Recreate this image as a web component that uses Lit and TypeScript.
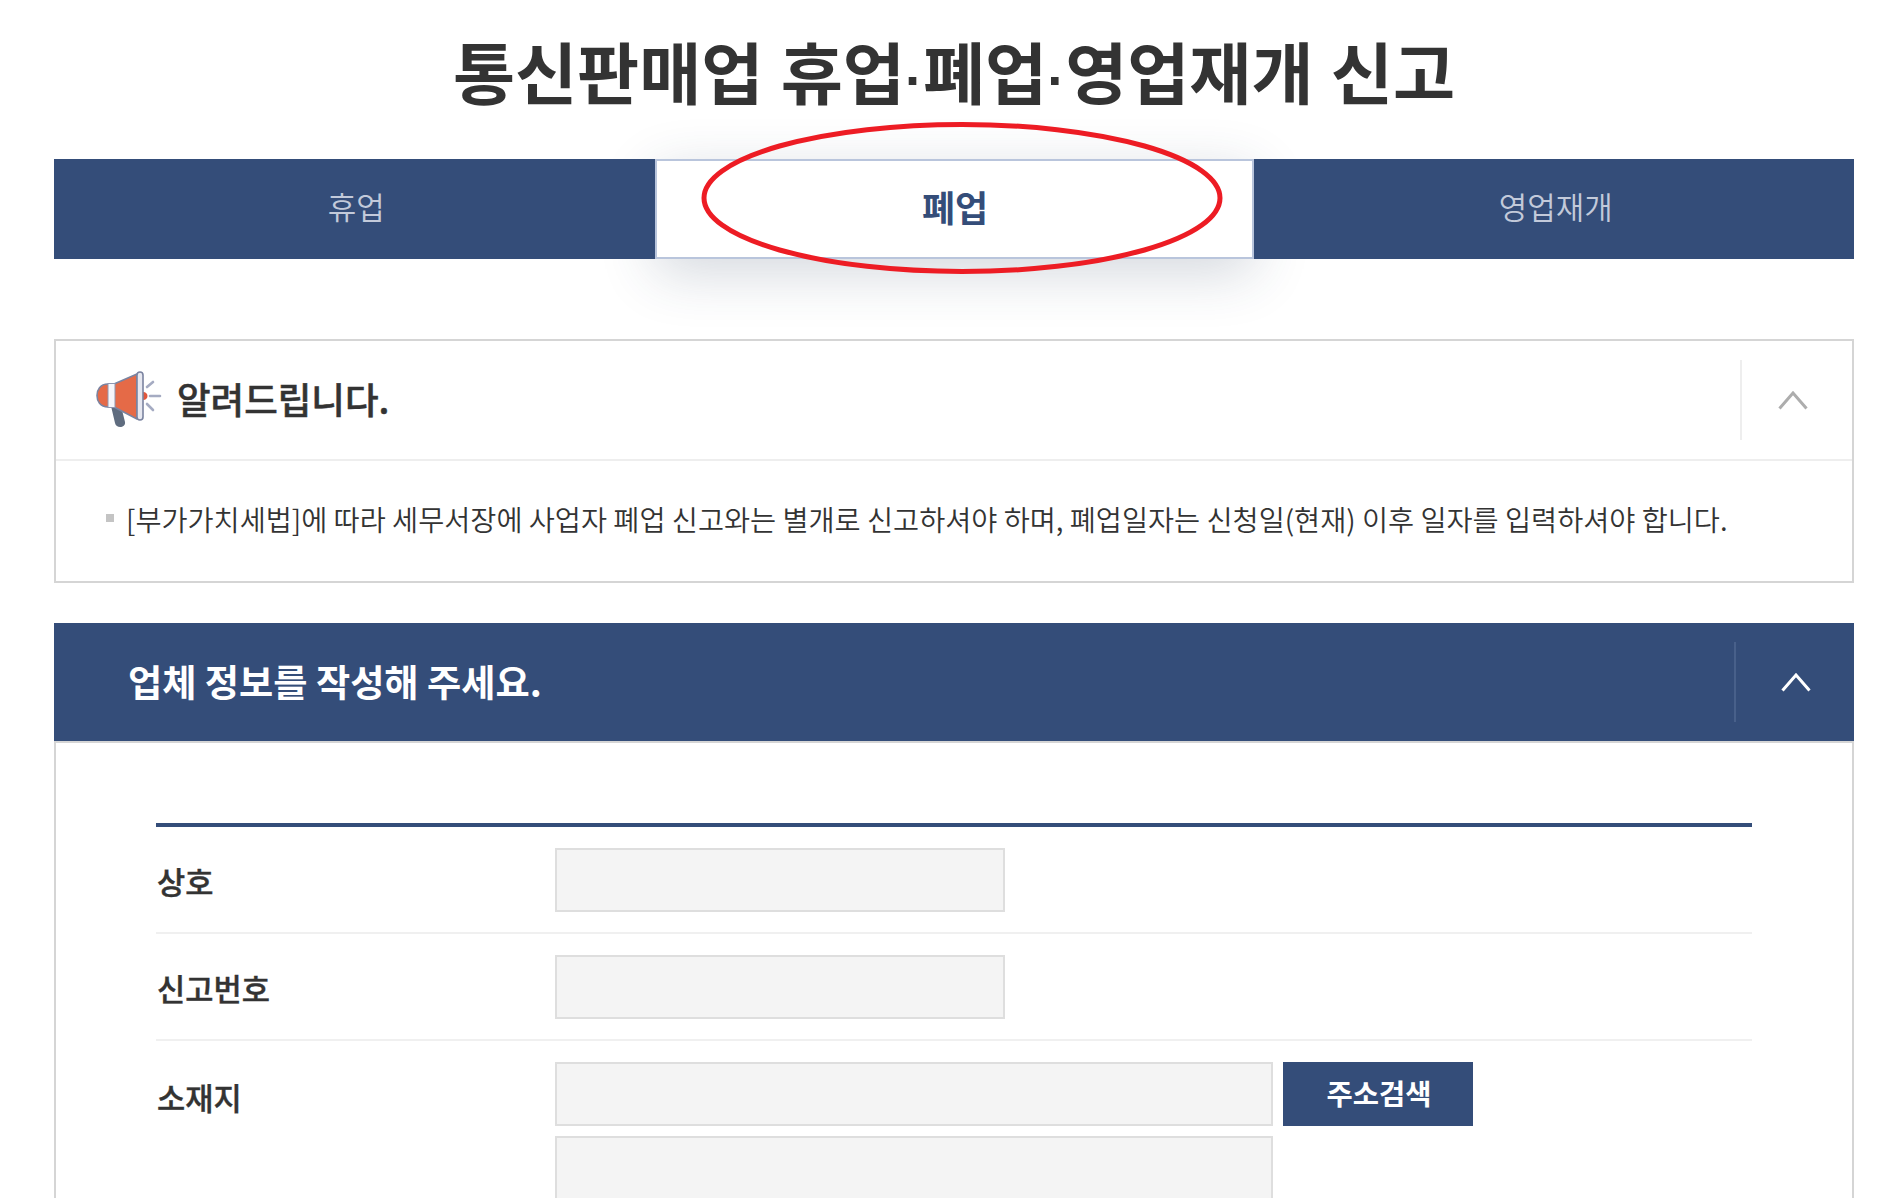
import { LitElement, html, css } from 'lit';
import { customElement, property } from 'lit/decorators.js';

const chevron = html`<svg class="chev" width="30" height="19" viewBox="0 0 30 19"><path d="M1.500 17.500 15 2 28.500 17.500" fill="none" stroke="currentColor" stroke-width="3"/></svg>`;

const megaphone = html`<svg width="66" height="58" viewBox="0 0 66 58">
  <path d="M51 16l6-5M54 25h10M51 33l6 6" fill="none" stroke="#a5abc2" stroke-width="2.600" stroke-linecap="round"/>
  <path d="M47 21c6 0 6 8 0 8z" fill="#e0563b"/>
  <path d="M15 35l4 17c1 6 11 5 10-1l-4-16z" fill="#5f6c7f"/>
  <path d="M12 13C4 13 1 19 1 24.500S4 36 12 36h6l23 12V3L18 13z" fill="#e56a47" stroke="#7a83a0" stroke-width="1.600" stroke-linejoin="round"/>
  <rect x="12" y="12.500" width="7" height="24" fill="#f6f6fa" stroke="#8f96b0" stroke-width="1"/>
  <rect x="41" y="1" width="6" height="48" rx="3" fill="#e7e8f0" stroke="#7a83a0" stroke-width="1.600"/>
</svg>`;

@customElement('app-root')
export class AppRoot extends LitElement {
  @property({ type: String }) activeTab = '폐업';

  static styles = css`
    :host {
      display: block;
      height: 1198px;
      overflow: hidden;
      background: #fff;
      font-family: "Noto Sans CJK KR", "Noto Sans", sans-serif;
      color: #333;
    }
    .page {
      position: relative;
      width: 1800px;
      margin-left: 54px;
    }
    h1 {
      margin: 0;
      height: 159px;
      padding-top: 24px;
      box-sizing: border-box;
      text-align: center;
      font-size: 67.500px;
      line-height: 92px;
      font-weight: 700;
      word-spacing: 2px;
      color: #333;
    }
    h1 .dot {
      font-family: "Liberation Sans", sans-serif;
      font-size: 54px;
    }

    /* Tabs */
    .tabs {
      display: flex;
      height: 100px;
    }
    .tab {
      position: relative;
      z-index: 1;
      width: 600.500px;
      display: flex;
      align-items: center;
      justify-content: center;
      background: #344d79;
      color: #c3cada;
      font-size: 31px;
      font-weight: 350;
      padding: 0 0 7px 4px;
      box-sizing: border-box;
    }
    .tab.active {
      z-index: 0;
      width: 599px;
      background: #fff;
      color: #344d79;
      font-size: 36px;
      font-weight: 700;
      border: 2px solid #b9c5dc;
      padding: 0 0 7px 2px;
      box-shadow: 0 14px 56px rgba(40, 60, 90, 0.2);
    }

    /* Boxes */
    .notice {
      margin-top: 80px;
      border: 2px solid #d5d5d5;
    }
    .notice-head {
      display: flex;
      align-items: center;
      height: 118px;
      padding-left: 40px;
      border-bottom: 2px solid #eee;
    }
    .notice-head h2 {
      flex: 1;
      margin: 0 0 3px 15px;
      font-size: 36.500px;
      font-weight: 500;
      -webkit-text-stroke: 0.5px #333;
      color: #333;
    }
    .toggle {
      display: flex;
      align-items: center;
      justify-content: center;
      box-sizing: border-box;
      height: 80px;
      width: 112px;
      padding-right: 9px;
      border-left: 2px solid #eee;
      color: #adadad;
    }
    .notice-body {
      display: flex;
      align-items: center;
      gap: 12px;
      height: 120px;
      padding: 0 0 6px 50px;
      box-sizing: border-box;
      font-size: 28.350px;
      font-weight: 350;
      color: #333;
      white-space: nowrap;
    }
    .bullet {
      width: 8px;
      height: 8px;
      background: #c4c4c4;
    }

    .section-head {
      display: flex;
      align-items: center;
      height: 118px;
      margin-top: 40px;
      padding-left: 74px;
      background: #344d79;
      color: #fff;
    }
    .section-head h2 {
      flex: 1;
      margin: 0 0 2px;
      font-size: 37.200px;
      font-weight: 700;
    }
    .section-head .toggle {
      width: 120px;
      padding: 0 0 0 2px;
      border-left-color: #48608a;
      color: #fff;
    }
    .panel {
      border: 2px solid #d5d5d5;
      padding: 80px 100px 0;
      height: 600px;
    }
    .form {
      border-top: 4px solid #344d79;
    }
    .row {
      display: flex;
      padding: 20.500px 0;
      border-bottom: 2px solid #f0f0f0;
    }
    .row label {
      box-sizing: border-box;
      width: 399px;
      height: 64px;
      padding-left: 1px;
      font-size: 30.700px;
      font-weight: 500;
      line-height: 66px;
      -webkit-text-stroke: 0.4px #333;
      color: #333;
    }
    .row:last-child label {
      padding-top: 2px;
    }
    .fields {
      display: flex;
      flex-direction: column;
      gap: 10px;
    }
    .line {
      display: flex;
      gap: 10px;
    }
    .input {
      width: 450px;
      height: 64px;
      box-sizing: border-box;
      border: 2px solid #dedede;
      background: #f4f4f4;
    }
    .input.wide {
      width: 718px;
    }
    .btn {
      width: 190px;
      height: 64px;
      border: none;
      padding: 0 0 2px 2px;
      background: #344d79;
      color: #fff;
      font-family: inherit;
      font-size: 28.500px;
      font-weight: 700;
    }

    /* red marker drawn over the page */
    .marker {
      position: absolute;
      left: 640px;
      top: 120px;
      pointer-events: none;
    }
  `;

  render() {
    return html`
      <div class="page">
        <h1>통신판매업 휴업<span class="dot">·</span>폐업<span class="dot">·</span>영업재개 신고</h1>
        <div class="tabs">
          ${['휴업', '폐업', '영업재개'].map(t => html`
            <div class="tab ${t === this.activeTab ? 'active' : ''}">${t}</div>
          `)}
        </div>

        <div class="notice">
          <div class="notice-head">
            ${megaphone}
            <h2>알려드립니다.</h2>
            <div class="toggle">${chevron}</div>
          </div>
          <div class="notice-body">
            <span class="bullet"></span>
            <span>[부가가치세법]에 따라 세무서장에 사업자 폐업 신고와는 별개로 신고하셔야 하며, 폐업일자는 신청일(현재) 이후 일자를 입력하셔야 합니다.</span>
          </div>
        </div>

        <div class="section-head">
          <h2>업체 정보를 작성해 주세요.</h2>
          <div class="toggle">${chevron}</div>
        </div>
        <div class="panel">
          <div class="form">
            <div class="row">
              <label>상호</label>
              <div class="fields"><div class="input"></div></div>
            </div>
            <div class="row">
              <label>신고번호</label>
              <div class="fields"><div class="input"></div></div>
            </div>
            <div class="row">
              <label>소재지</label>
              <div class="fields">
                <div class="line">
                  <div class="input wide"></div>
                  <button class="btn">주소검색</button>
                </div>
                <div class="input wide"></div>
              </div>
            </div>
          </div>
        </div>

        <svg class="marker" width="536" height="156" viewBox="0 0 536 156">
          <ellipse cx="268" cy="78" rx="258" ry="73.500" fill="none" stroke="#ed1c24" stroke-width="5"/>
        </svg>
      </div>
    `;
  }
}

declare global {
  interface HTMLElementTagNameMap {
    'app-root': AppRoot;
  }
}
